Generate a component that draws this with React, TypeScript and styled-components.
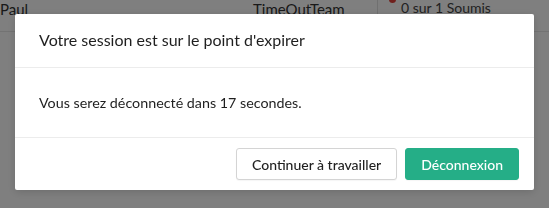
import React from 'react';
import styled, { createGlobalStyle } from 'styled-components';

const GlobalStyle = createGlobalStyle`
  html, body {
    margin: 0;
    padding: 0;
    background: #ffffff;
    font-family: Lato, "Noto Sans", sans-serif;
    color: #1f1f1f;
  }
`;

const Page = styled.div`
  width: 549px;
  height: 208px;
  overflow: hidden;
`;

const TableRow = styled.div`
  display: grid;
  grid-template-columns: 253px 124px 1fr;
  height: 44px;
  margin-top: -13px;
  border-bottom: 1px solid #e6e6e6;
  font-size: 15px;
  color: #333;
`;

const Cell = styled.div<{ $divider?: boolean }>`
  display: flex;
  flex-direction: column;
  justify-content: center;
  padding-left: ${(p) => (p.$divider ? '11px' : '0')};
  border-left: ${(p) => (p.$divider ? '1px solid #e0e0e0' : 'none')};
`;

const StatusLine = styled.div`
  display: flex;
  align-items: flex-end;
  height: 10px;
`;

const RedDot = styled.span`
  width: 7px;
  height: 7px;
  margin-bottom: -3px;
  border-radius: 50%;
  background: #e0413a;
`;

const SubText = styled.div`
  font-size: 14px;
  line-height: 16px;
  color: #444;
  margin: 0 0 12px 12px;
`;

const Overlay = styled.div`
  position: fixed;
  inset: 0;
  background: rgba(0, 0, 0, 0.5);
`;

const Modal = styled.div`
  position: fixed;
  left: 15px;
  top: 14px;
  width: 519px;
  background: #fff;
  border-radius: 2px;
  box-shadow: 0 2px 8px rgba(0, 0, 0, 0.15);
`;

const Header = styled.div`
  height: 54px;
  box-sizing: border-box;
  display: flex;
  align-items: center;
  padding: 0 24px 3px;
  border-bottom: 1px solid #ececec;
`;

const Title = styled.h2`
  margin: 0;
  font-size: 16px;
  font-weight: 400;
  color: #1f1f1f;
`;

const Body = styled.div`
  height: 70px;
  box-sizing: border-box;
  display: flex;
  align-items: center;
  padding: 0 24px 1px;
  border-bottom: 1px solid #ececec;
  font-size: 14.3px;
  color: #1f1f1f;
`;

const Footer = styled.div`
  display: flex;
  justify-content: flex-end;
  gap: 8px;
  padding: 10px 15px 10px 24px;
`;

const Button = styled.button<{ $primary?: boolean }>`
  height: 32px;
  padding: 0 15px;
  border-radius: 3px;
  font-family: inherit;
  font-size: 14px;
  font-weight: 500;
  cursor: pointer;
  border: 1px solid ${(p) => (p.$primary ? '#25ae87' : '#d4d4d4')};
  background: ${(p) => (p.$primary ? '#25ae87' : '#fff')};
  color: ${(p) => (p.$primary ? '#fff' : '#1f1f1f')};
  box-shadow: 0 1px 1px rgba(0, 0, 0, 0.04);
`;

const App: React.FC = () => {
  return (
    <Page>
      <GlobalStyle />
      <TableRow>
        <Cell>Paul</Cell>
        <Cell>TimeOutTeam</Cell>
        <Cell $divider>
          <StatusLine>
            <RedDot />
          </StatusLine>
          <SubText>0 sur 1 Soumis</SubText>
        </Cell>
      </TableRow>
      <Overlay />
      <Modal role="dialog">
        <Header>
          <Title>Votre session est sur le point d'expirer</Title>
        </Header>
        <Body>Vous serez déconnecté dans 17 secondes.</Body>
        <Footer>
          <Button>Continuer à travailler</Button>
          <Button $primary>Déconnexion</Button>
        </Footer>
      </Modal>
    </Page>
  );
};

export default App;
